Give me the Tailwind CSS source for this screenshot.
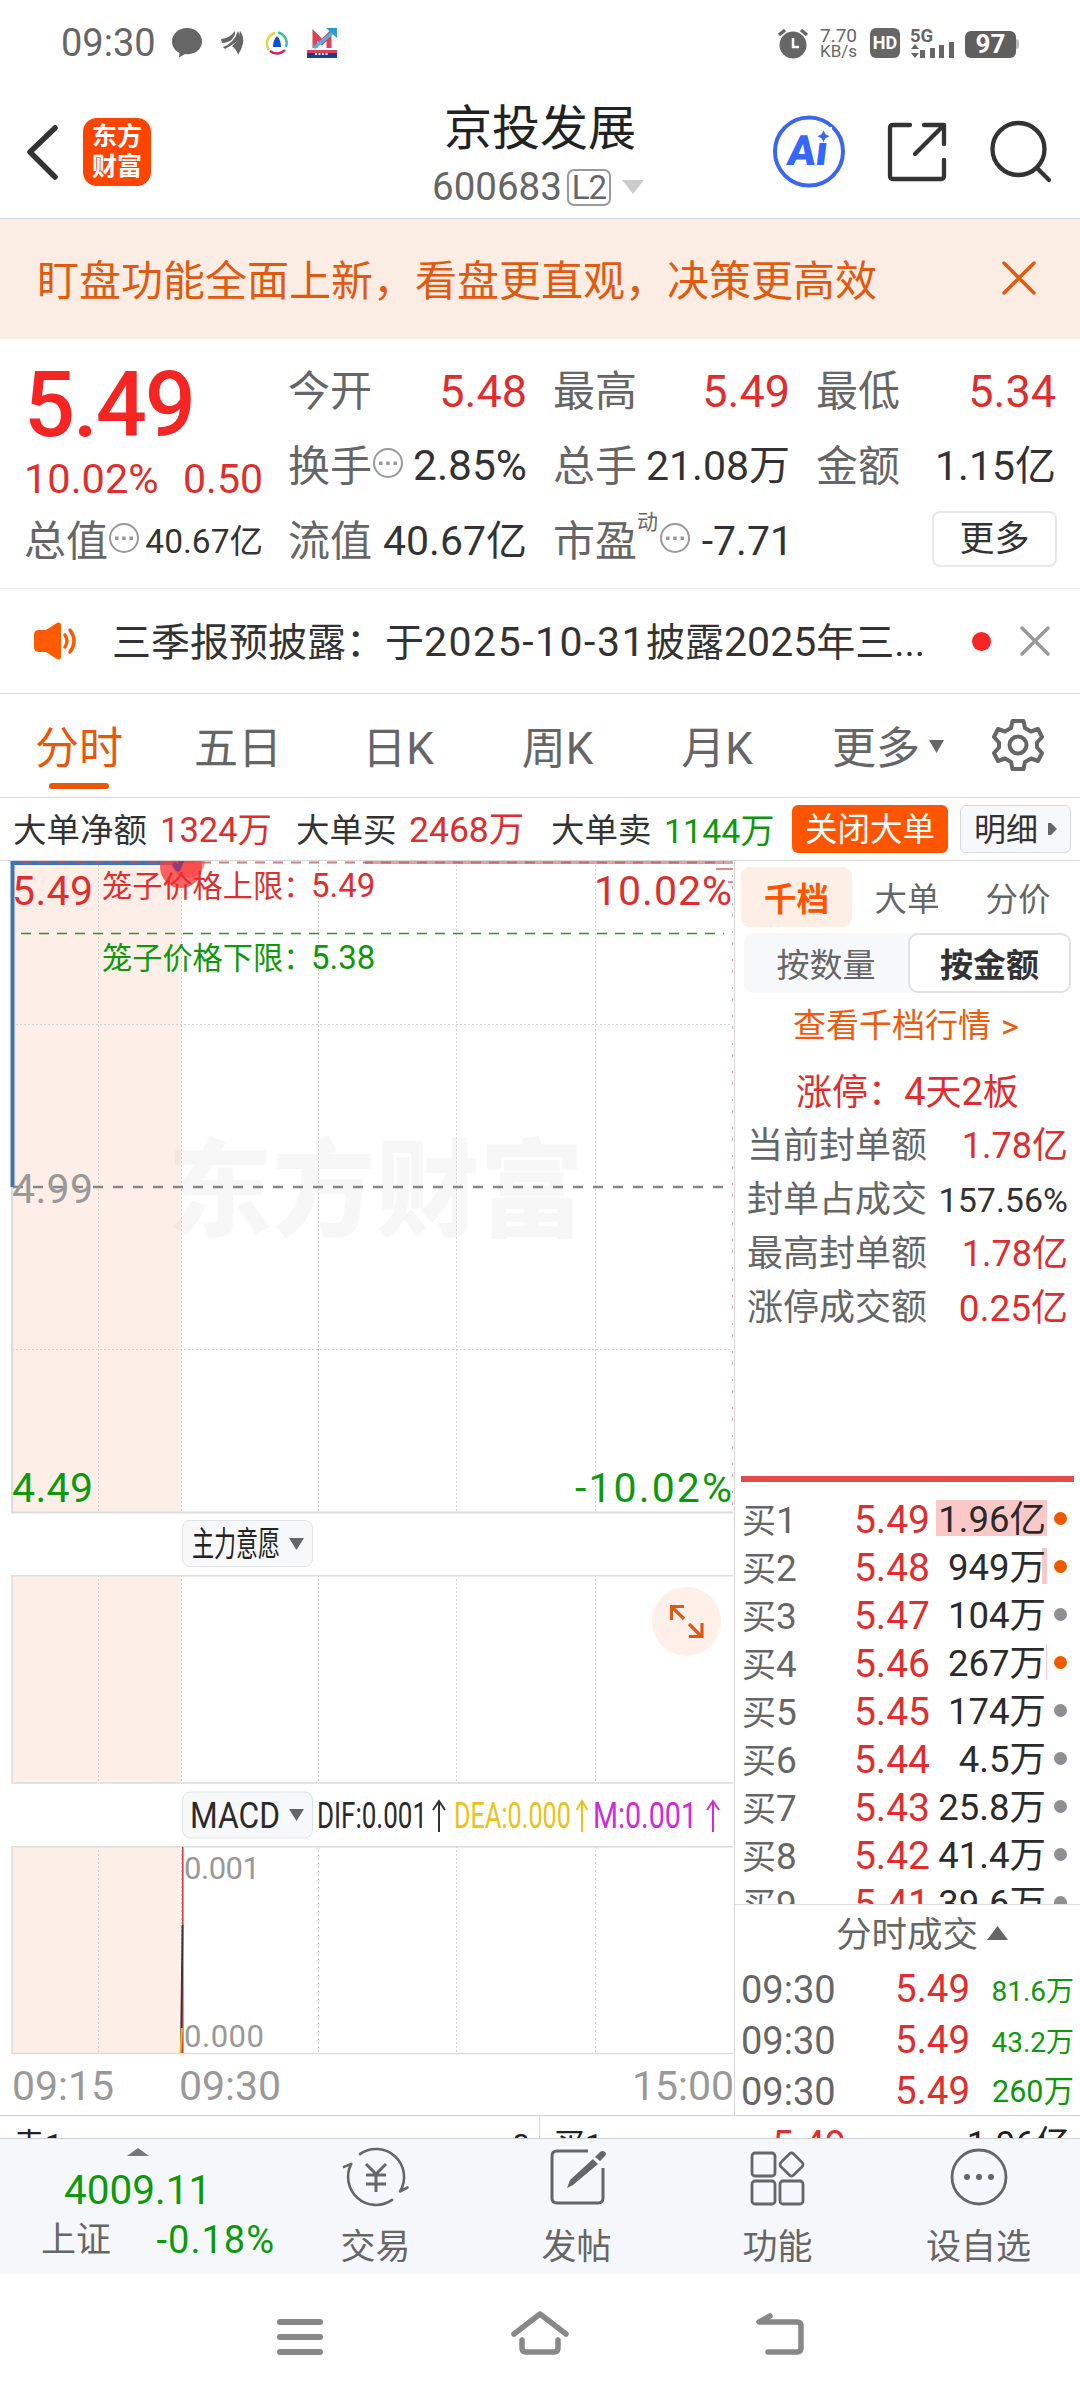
<!DOCTYPE html>
<html lang="zh-CN">
<head>
<meta charset="utf-8">
<title>京投发展 600683</title>
<script src="https://cdn.jsdelivr.net/npm/@tailwindcss/browser@4"></script>
</head>
<body class="w-[1080px] h-[2400px] overflow-hidden bg-white font-['Roboto','Noto_Sans_CJK_SC',sans-serif] text-[#333] whitespace-nowrap leading-none">

<!-- status bar -->
<div class="h-[85px] pl-[61px] pr-[61px] flex items-center justify-between text-[#666]">
  <div class="flex items-center">
    <span class="text-[38px] w-[96px]">09:30</span>
    <svg class="ml-[14px]" width="32" height="32" viewBox="0 0 32 32"><path fill="#666" d="M16 1C7.500 1 1 7 1 14.500c0 5 3 9.300 7.500 11.500L8 30.500l6-3.600C24 28.500 31 22 31 14.500 31 7 24.500 1 16 1z"/></svg>
    <svg class="ml-[17px]" width="26" height="28" viewBox="0 0 26 28"><g fill="#666"><path d="M1 10Q10 9 15 2q1 5-5 10Q6 14 2 14z"/><path d="M3 18Q14 14 18 2q4 6-3 12Q10 17 5 20z"/><path d="M12 17Q19 12 20 2q4 5 3 12-1 6-5 12-1-5-6-9z"/></g></svg>
    <svg class="ml-[18px]" width="26" height="26" viewBox="0 0 26 26" fill="none" stroke-width="2.500"><path stroke="#e8d040" d="M5 20A11 11 0 0 1 11 3"/><path stroke="#3fc0a8" d="M14 2.500A11 11 0 0 1 22 17"/><path stroke="#d8205c" d="M6 21A11 11 0 0 0 21 20"/><path fill="#0a50d8" d="M13 6q4 4 4 11H9q0-7 4-11z"/></svg>
    <svg class="ml-[16px]" width="32" height="32" viewBox="0 0 32 32"><path fill="none" stroke="#e04058" stroke-width="5" d="M9 21V8l7 7 7-7v13"/><path fill="none" stroke="#45b8e8" stroke-width="3.500" d="M8 21 26 6"/><path fill="#2a9ad0" d="M20 1h11v10z"/><path fill="#e0405a" d="M1 23h30v3H1z"/><path fill="#1c3f90" d="M1 26h30v5H1z"/><path stroke="#fff" stroke-width="2" stroke-dasharray="2 1.500" d="M9 27h14"/></svg>
  </div>
  <div class="flex items-center">
    <svg width="32" height="32" viewBox="0 0 32 32"><circle cx="16" cy="18" r="13.500" fill="#666"/><path stroke="#666" stroke-width="3.500" d="m2 8 6-5M30 8l-6-5"/><path stroke="#fff" stroke-width="2.500" fill="none" d="M16 11v9h6"/></svg>
    <div class="ml-[11px] w-[42px] flex flex-col"><span class="text-[19px] leading-[17px]">7.70</span><span class="text-[17px] leading-[15px]">KB/s</span></div>
    <div class="ml-[8px] w-[30px] h-[30px] rounded-[6px] bg-[#666] text-white text-[18px] font-bold flex items-center justify-center">HD</div>
    <svg class="ml-[10px]" width="48" height="32" viewBox="0 0 48 32"><text x="0" y="15" font-size="18.500" font-weight="bold" fill="#666">5G</text><path fill="#666" d="m5 17 4 5H1zM5 31l4-5H1zM10 23h5v8h-5zM20 21h5v10h-5zM29 18h5v13h-5zM39 15h5v16h-5z"/></svg>
    <div class="ml-[7px] w-[51px] h-[27px] mt-[3px] rounded-[6px] bg-[#5f5f5f] text-white text-[26px] font-bold flex items-center justify-center">97</div>
    <div class="w-[3px] h-[10px] mt-[3px] rounded-r bg-[#bbb]"></div>
  </div>
</div>

<!-- title bar -->
<div class="h-[133px] flex border-b-[1px] border-[#d3d6d9] box-content">
  <div class="w-[400px] flex items-start pt-[33px] pl-[23px]">
    <svg width="40" height="68" viewBox="0 0 40 68"><path d="M32 10 7 34l25 25" fill="none" stroke="#333" stroke-width="5.500" stroke-linecap="round" stroke-linejoin="round"/></svg>
    <div class="ml-[20px] w-[68px] h-[68px] rounded-[14px] bg-[#ff4400] text-white text-[25px] font-bold leading-[30px] pt-[4px] text-center">东方<br>财富</div>
  </div>
  <div class="w-[280px] flex flex-col items-center pt-[18px]">
    <div class="text-[48px] leading-[52px] text-[#222]">京投发展</div>
    <div class="mt-[10px] w-full flex items-center pl-[32px] text-[#666]">
      <span class="text-[38.500px] leading-[44px]">600683</span>
      <span class="ml-[5px] w-[44px] h-[37px] border-2 border-[#999] rounded-[7px] text-[33px] leading-[33px] text-center tracking-[-1px]">L2</span>
      <svg class="ml-[10px]" width="24" height="16" viewBox="0 0 24 16"><path d="M1 1h22L12 15z" fill="#ccc"/></svg>
    </div>
  </div>
  <div class="flex items-start pt-[30px] pl-[92px]">
    <svg width="74" height="74" viewBox="0 0 74 74"><circle cx="37" cy="36.500" r="34" fill="#fff" stroke="#3b66f0" stroke-width="4"/><g transform="translate(0 50) skewX(-7)"><text x="14" y="0" font-size="42" font-weight="900" fill="#3566ff" textLength="40" lengthAdjust="spacingAndGlyphs">Ai</text></g><path fill="#fff" d="M42 12h18v16H42z"/><path fill="#3b66f0" d="m51.500 15.500 2 3.800 4 2-4 2-2 3.800-2-3.800-4-2 4-2z"/></svg>
    <svg class="ml-[40px]" width="62" height="74" viewBox="0 0 62 74" fill="none" stroke="#333" stroke-width="4.300" stroke-linecap="round" stroke-linejoin="round"><path d="M24 10H7q-3 0-3 3v48q0 3 3 3h48q3 0 3-3V45M38 10h20v19M58 10 29 39"/></svg>
    <svg class="ml-[40px]" width="66" height="74" viewBox="0 0 66 74" fill="none" stroke="#333" stroke-width="4.300" stroke-linecap="round"><circle cx="30.500" cy="34" r="26"/><path d="m49 53 12 12"/></svg>
  </div>
</div>

<!-- notice banner -->
<div class="h-[120px] bg-[#fcede4] flex items-center justify-between pl-[37px] pr-[43px] text-[#e05a10]">
  <span class="text-[42px] pt-[6px]">盯盘功能全面上新，看盘更直观，决策更高效</span>
  <svg width="36" height="36" viewBox="0 0 36 36"><path d="m3 2 30 30M33 2 3 32" stroke="#e05a10" stroke-width="3.500" stroke-linecap="round"/></svg>
</div>

<!-- quote summary -->
<div class="h-[250px] pt-[15px] pl-[24px] flex border-b-[1px] border-[#ececec] text-[41px]">
  <div class="w-[264px]">
    <div class="h-[104px] flex items-center text-[90px] font-medium text-[#f42522] tracking-[-2.200px]">5.49</div>
    <div class="h-[46px] w-[239px] -mt-[2px] flex items-center justify-between text-[#e02e2e]"><span class="text-[41.500px]">10.02%</span><span>0.50</span></div>
    <div class="h-[75px] w-[239px] mt-[2px] flex items-center"><span class="text-[42px] text-[#666]">总值</span><svg class="-mt-[7px] ml-[1px]" width="30" height="30" viewBox="0 0 30 30"><circle cx="15" cy="15" r="14" fill="none" stroke="#999" stroke-width="2"/><path fill="#999" d="M6 13.500h3.500v3.500H6zM13.200 13.500h3.500v3.500h-3.500zM20.500 13.500H24v3.500h-3.500z"/></svg><span class="ml-auto text-[33.500px]">40.67亿</span></div>
  </div>
  <div class="w-[265px] pr-[26px]">
    <div class="h-[75px] flex items-center justify-between"><span class="text-[42px] text-[#666]">今开</span><span class="text-[45px] text-[#e02e2e]">5.48</span></div>
    <div class="h-[75px] flex items-center"><span class="text-[42px] text-[#666]">换手</span><svg class="-mt-[7px] ml-[1px]" width="30" height="30" viewBox="0 0 30 30"><circle cx="15" cy="15" r="14" fill="none" stroke="#999" stroke-width="2"/><path fill="#999" d="M6 13.500h3.500v3.500H6zM13.200 13.500h3.500v3.500h-3.500zM20.500 13.500H24v3.500h-3.500z"/></svg><span class="ml-auto text-[42.500px]">2.85%</span></div>
    <div class="h-[75px] flex items-center justify-between"><span class="text-[42px] text-[#666]">流值</span><span>40.67亿</span></div>
  </div>
  <div class="w-[263px] pr-[26px]">
    <div class="h-[75px] flex items-center justify-between"><span class="text-[42px] text-[#666]">最高</span><span class="text-[45px] text-[#e02e2e]">5.49</span></div>
    <div class="h-[75px] flex items-center justify-between"><span class="text-[42px] text-[#666]">总手</span><span>21.08万</span></div>
    <div class="h-[75px] flex items-center"><span class="text-[42px] text-[#666]">市盈</span><span class="text-[21px] text-[#666] -mt-[38px]">动</span><svg class="-mt-[7px] ml-[2px]" width="30" height="30" viewBox="0 0 30 30"><circle cx="15" cy="15" r="14" fill="none" stroke="#999" stroke-width="2"/><path fill="#999" d="M6 13.500h3.500v3.500H6zM13.200 13.500h3.500v3.500h-3.500zM20.500 13.500H24v3.500h-3.500z"/></svg><span class="ml-auto -mr-[3px] text-[41px]">-7.71</span></div>
  </div>
  <div class="w-[240px]">
    <div class="h-[75px] flex items-center justify-between"><span class="text-[42px] text-[#666]">最低</span><span class="text-[45px] text-[#e02e2e]">5.34</span></div>
    <div class="h-[75px] flex items-center justify-between"><span class="text-[42px] text-[#666]">金额</span><span>1.15亿</span></div>
    <div class="h-[75px] pt-[7px] flex justify-end"><span class="w-[125px] h-[56px] -mr-[1px] border-2 border-[#e6e8ea] rounded-[8px] text-[35px] flex items-center justify-center">更多</span></div>
  </div>
</div>

<!-- news line -->
<div class="h-[105px] pl-[32px] flex items-center border-b-[1px] border-[#d6d6d6]">
  <svg width="50" height="42" viewBox="0 0 50 42"><path fill="#ff5a00" d="M7 10h7L24 3.500q5-2.500 5 2v31q0 4.500-5 2L14 32H7q-5 0-5-5V15q0-5 5-5z"/><path fill="none" stroke="#ff5a00" stroke-width="3.500" stroke-linecap="round" d="M33 15q4 6 0 12M38 10q8 11 0 22"/></svg>
  <span class="ml-[30px] w-[815px] pt-[2px] text-[39px]">三季报预披露：于<span class="text-[41px] tracking-[1.500px]">2025-10-31</span>披露<span class="text-[41px]">2025</span>年三...</span>
  <span class="ml-[45px] w-[19px] h-[19px] rounded-full bg-[#f42522]"></span>
  <svg class="ml-[28px]" width="32" height="32" viewBox="0 0 32 32"><path d="m3 3 26 26M29 3 3 29" stroke="#999" stroke-width="3.500" stroke-linecap="round"/></svg>
</div>

<!-- period tabs -->
<div class="h-[104px] flex border-b-[1px] border-[#d6d6d6] text-[44px] text-[#666]">
  <div class="w-[158px] pt-[33px] flex flex-col items-center text-[#e55a0a]"><span>分时</span><span class="mt-[12px] w-[60px] h-[6px] rounded-full bg-[#e55a0a]"></span></div>
  <div class="w-[160px] pt-[33px] text-center">五日</div>
  <div class="w-[160px] pt-[33px] text-center">日K</div>
  <div class="w-[159px] pt-[33px] text-center">周K</div>
  <div class="w-[160px] pt-[33px] text-center">月K</div>
  <div class="w-[191px] pt-[33px] pl-[35px] flex items-start"><span>更多</span><svg class="ml-[8px] mt-[12px]" width="18" height="16" viewBox="0 0 18 16"><path d="M1 1h15L8.500 14z" fill="#666"/></svg></div>
  <svg class="mt-[22px] ml-[1px]" width="58" height="58" viewBox="-29 -29 58 58" fill="none" stroke="#666" stroke-width="4" stroke-linejoin="round"><circle r="8.500"/><path d="M-5.500-24h11l1.500 7 6 3.500 7-2.500 4 8-5 5.500v5l5 5.500-4 8-7-2.500-6 3.500-1.500 7h-11l-1.500-7-6-3.500-7 2.500-4-8 5-5.500v-5l-5-5.500 4-8 7 2.500 6-3.500z"/></svg>
</div>

<!-- big order summary -->
<div class="h-[63px] pl-[13px] flex items-center border-b-[1px] border-[#d6d6d6] text-[33.500px]">
  <span class="w-[147px] pt-[3px]">大单净额</span><span class="w-[136px] pt-[3px] text-[34.500px] text-[#e02e2e]">1324万</span>
  <span class="w-[113px] pt-[3px]">大单买</span><span class="w-[142px] pt-[3px] text-[35.500px] text-[#e02e2e]">2468万</span>
  <span class="w-[113px] pt-[3px]">大单卖</span><span class="w-[128px] pt-[3px] text-[34px] text-[#0c9a0c]">1144万</span>
  <span class="w-[156px] h-[48px] pt-[2px] rounded-[6px] bg-[#ff5500] text-white text-[32.500px] flex items-center justify-center">关闭大单</span>
  <span class="ml-[12px] w-[111px] h-[48px] pt-[2px] rounded-[6px] border-[1px] border-[#d5d9dc] bg-[#f7f8fa] text-[32px] flex items-center pl-[13px]">明细<svg class="ml-[9px] -mt-[2px]" width="11" height="14" viewBox="0 0 11 14"><path d="M1 1h3l6 6-6 6H1z" fill="#666"/></svg></span>
</div>

<div class="h-[1255px] flex border-b-[1px] border-[#d0d0d0]">
  <!-- charts -->
  <div class="w-[735px] border-r-[1px] border-[#d6d6d6]">
    <svg class="block" width="734" height="653" viewBox="0 861 734 653" font-size="41">
      <path fill="#fdeee7" d="M12 861h169v651H12z"/>
      <text x="168" y="1228" font-size="106" font-weight="900" fill="#000" fill-opacity=".03" textLength="416" lengthAdjust="spacingAndGlyphs">东方财富</text>
      <path fill="none" stroke="#d2d2d2" stroke-dasharray="2 2" d="M98.500 861v651M181.500 861v651M318.500 861v651M456.500 861v651M595.500 861v651M12 1024.500h720M12 1349.500h720"/>
      <path stroke="#d9a0a0" stroke-dasharray="2 9 3 14" d="M732.500 875v630"/>
      <path stroke="#dcdcdc" stroke-width="2" d="M12 861v651M11 1512.500h722"/>
      <path stroke="#888" stroke-width="2.500" stroke-dasharray="10 10" d="M13 1187h716"/>
      <path fill="none" stroke="#3b74b8" stroke-width="4" d="M12.500 1187V863H181"/>
      <path stroke="#e0a0a0" stroke-width="3" d="M365 862.500h368"/><path stroke="#e58a8a" stroke-width="2" d="M716 869h17M728 882h5"/>
      <path stroke="#c05060" stroke-opacity=".75" stroke-width="2" stroke-dasharray="10 8" d="M21 862.500h703"/>
      <path stroke="#2c902c" stroke-width="1.500" stroke-dasharray="10 8" d="M21 933.500h703"/>
      <circle cx="188" cy="861" r="17" fill="#f44" fill-opacity=".55"/><circle cx="181" cy="867" r="21" fill="#f83c3c" fill-opacity=".8"/><path stroke="#8a3c78" stroke-width="5" stroke-linecap="round" d="m178 869 4-9M175 865l3 4"/>
      <g fill="#e02e2e"><text x="12" y="905" textLength="81">5.49</text><text x="594" y="905" textLength="138">10.02%</text><text x="102" y="897" font-size="30.200">笼子价格上限：<tspan x="311" font-size="33">5.49</tspan></text></g>
      <g fill="#0c9a0c"><text x="102" y="969" font-size="30.200">笼子价格下限：<tspan x="311" font-size="33">5.38</tspan></text><text x="12" y="1502" textLength="81">4.49</text><text x="575" y="1502" textLength="157">-10.02%</text></g>
      <text x="12" y="1203" fill="#999" textLength="81">4.99</text>
    </svg>
    <div class="h-[61px] pl-[182px] pt-[6px]">
      <div class="w-[131px] h-[47px] rounded-[8px] border-[1px] border-[#dfe3e7] bg-[#f7f8fa]"><svg width="129" height="45" viewBox="0 0 129 45"><text x="9" y="35" font-size="34" fill="#222" textLength="88" lengthAdjust="spacingAndGlyphs">主力意愿</text><path d="M106 17h15l-7.500 12z" fill="#666"/></svg></div>
    </div>
    <svg class="block" width="734" height="210" viewBox="0 1575 734 210">
      <path fill="#fdeee7" d="M12 1575h169v208H12z"/>
      <path fill="none" stroke="#d2d2d2" stroke-dasharray="2 2" d="M98.500 1575v208M181.500 1575v208M318.500 1575v208M456.500 1575v208M595.500 1575v208"/>
      <path fill="none" stroke="#dcdcdc" stroke-width="1.500" d="M733 1575.700H12V1783h721"/>
      <circle cx="686.500" cy="1621.500" r="34.500" fill="#fef0e8"/>
      <path fill="none" stroke="#dc5a14" stroke-width="3.200" d="M684 1606.500h-12.500V1620M672 1607l12 12M689 1624l12 12M689 1636.500h13V1623"/>
    </svg>
    <div class="h-[61px] pt-[6px]">
      <svg class="block" width="734" height="48" viewBox="0 1791 734 48" font-size="36.500"><rect x="182.500" y="1792" width="130" height="46" rx="8" fill="#f7f8fa" stroke="#dfe3e7"/><path d="M289 1809h15l-7.500 12z" fill="#666"/>
      <g fill="#2b2b2b"><text x="190" y="1828" textLength="90" lengthAdjust="spacingAndGlyphs">MACD</text><text x="317" y="1828" textLength="110" lengthAdjust="spacingAndGlyphs">DIF:0.001</text></g>
      <text x="454" y="1828" fill="#ecc21a" textLength="117" lengthAdjust="spacingAndGlyphs">DEA:0.000</text><text x="593" y="1828" fill="#d22ad8" textLength="104" lengthAdjust="spacingAndGlyphs">M:0.001</text>
      <g fill="none" stroke-width="2"><path stroke="#333" d="M439 1832v-30M433 1810l6-9 6 9"/><path stroke="#ecc21a" d="M582 1832v-30M576.500 1810l5.500-9 5.500 9"/><path stroke="#d22ad8" d="M713 1832v-30M707 1810l6-9 6 9"/></g></svg>
    </div>
    <svg class="block" width="734" height="209" viewBox="0 1846 734 209" font-size="31" fill="#999">
      <path fill="#fdeee7" d="M12 1846h169v207H12z"/>
      <path fill="none" stroke="#d2d2d2" stroke-dasharray="2 2" d="M98.500 1846v207M181.500 1846v207M318.500 1846v207M456.500 1846v207M595.500 1846v207"/>
      <path fill="none" stroke="#dcdcdc" stroke-width="1.500" d="M733 1846.700H12V2053.500h721"/>
      <path stroke="#d03434" stroke-width="1.500" d="M182.800 1847v206"/><path stroke="#333" stroke-width="1.800" d="M182.500 1925 181 2053"/><path stroke="#ecb81a" stroke-width="2" d="m182 2028-1.500 25"/>
      <text x="184" y="1879" textLength="76">0.001</text><text x="184" y="2047" textLength="80">0.000</text>
    </svg>
    <div class="h-[60px] pl-[12px] flex items-center text-[41px] text-[#999] pt-[3px]"><span class="w-[167px]">09:15</span><span>09:30</span><span class="ml-auto">15:00</span></div>
  </div>

  <!-- order book -->
  <div class="w-[345px] text-[36px]">
    <div class="h-[66px] mt-[6px] pl-[6px] flex items-start text-[32.500px] text-[#666]">
      <span class="w-[111px] h-[60px] rounded-[9px] bg-[#fdeee6] text-[#ff5500] font-bold flex items-center justify-center pt-[6px]">千档</span>
      <span class="w-[110px] h-[60px] flex items-center justify-center pt-[6px]">大单</span>
      <span class="w-[112px] h-[60px] flex items-center justify-center pt-[6px]">分价</span>
    </div>
    <div class="ml-[9px] w-[327px] h-[60px] rounded-[10px] bg-[#f7f8fa] flex text-[33px]">
      <span class="w-[164px] flex items-center justify-center pt-[5px] text-[#666]">按数量</span>
      <span class="w-[163px] rounded-[10px] border-2 border-[#e2e2e2] bg-white font-bold flex items-center justify-center pt-[5px]">按金额</span>
    </div>
    <div class="h-[64px] pl-[58px] pt-[1px] flex items-center text-[33px] text-[#f05a0a]">查看千档行情<span class="ml-[10px] text-[34px]">&gt;</span></div>
    <div class="h-[62px] pt-[8px] flex items-center justify-center text-[36px] text-[#e02e2e]"><span>涨停：<span class="text-[38px]">4</span>天<span class="text-[38px]">2</span>板</span></div>
    <div class="pl-[12px] pr-[12px] text-[#666]">
      <div class="h-[54px] flex items-center justify-between"><span>当前封单额</span><span class="text-[#e02e2e]">1.78亿</span></div>
      <div class="h-[54px] flex items-center justify-between"><span>封单占成交</span><span class="text-[34px] text-[#333]">157.56%</span></div>
      <div class="h-[54px] flex items-center justify-between"><span>最高封单额</span><span class="text-[#e02e2e]">1.78亿</span></div>
      <div class="h-[54px] flex items-center justify-between"><span>涨停成交额</span><span class="text-[37px] text-[#e02e2e]">0.25亿</span></div>
    </div>
    <div class="mt-[141px] ml-[6px] w-[333px] h-[6px] bg-[#e54b4b]"></div>
    <div class="h-[423px] pt-[14px] pl-[7px] overflow-hidden border-b-[1px] border-[#dcdcdc] text-[#2b2b2b]" id="bids"></div>
    <div class="h-[59px] pt-[2px] pl-[101px] flex items-center text-[35.500px] text-[#666]">分时成交<svg class="ml-[8px] -mt-[6px]" width="23" height="16" viewBox="0 0 23 16"><path d="M1 15h21L11.500 1z" fill="#666"/></svg></div>
    <div class="pl-[6px] pr-[6px] text-[38px]">
      <div class="h-[51px] flex items-center"><span class="w-[154px] text-[#666]">09:30</span><span class="text-[38.500px] text-[#e02e2e]">5.49</span><span class="ml-auto text-[28px] text-[#0c9a0c] pt-[4px]">81.6万</span></div>
      <div class="h-[51px] flex items-center"><span class="w-[154px] text-[#666]">09:30</span><span class="text-[38.500px] text-[#e02e2e]">5.49</span><span class="ml-auto text-[28px] text-[#0c9a0c] pt-[4px]">43.2万</span></div>
      <div class="h-[51px] flex items-center"><span class="w-[154px] text-[#666]">09:30</span><span class="text-[38.500px] text-[#e02e2e]">5.49</span><span class="ml-auto text-[30.500px] text-[#0c9a0c] pt-[2px]">260万</span></div>
    </div>
  </div>
</div>

<!-- five-level table peeking out above the toolbar -->
<div class="h-[22px] overflow-hidden flex text-[32px] leading-[32px] text-[#222]">
  <div class="w-[540px] h-[22px] border-r-[1px] border-[#d6d6d6] pl-[13px] pr-[9px] pt-[13px] flex justify-between"><span>卖1</span><span>0</span></div>
  <div class="w-[540px] h-[22px] pl-[13px] pr-[10px] pt-[13px] flex"><span class="w-[219px]">买1</span><span class="text-[38px] text-[#e02e2e]">5.49</span><span class="ml-auto text-[35px]">1.96亿</span></div>
</div>

<!-- toolbar -->
<div class="h-[136px] bg-[#f6f7fa] border-t-[1px] border-[#cfd2d5] flex text-[35px] text-[#666]">
  <div class="w-[275px] flex flex-col">
    <svg class="ml-[126px] mt-[9px]" width="24" height="8" viewBox="0 0 24 8"><path d="M1 8h22L12 0z" fill="#777"/></svg>
    <div class="pl-[64px] mt-[12px] h-[44px] text-[40.500px] leading-[44px] text-[#0c9a0c]">4009.11</div>
    <div class="pl-[41px] mt-[6px] h-[44px] flex items-center justify-between"><span>上证</span><span class="text-[38px] text-[#0c9a0c] tracking-[1px]">-0.18%</span></div>
  </div>
  <div class="w-[201px] pt-[7px] flex flex-col items-center">
    <svg width="68" height="62" viewBox="-34 -31 68 62" fill="none" stroke="#666" stroke-width="2.600" stroke-linecap="round" stroke-linejoin="round"><path d="M-16.100-22.900A28 28 0 0 1 24 14.500l7.500-4M16.100 22.900A28 28 0 0 1-24.700-13.100l-7.300 3"/><path d="M-10-13 0-3l10-10M0-3v18M-10-2h20M-10 7h20" stroke-width="3" stroke-linecap="butt"/></svg>
    <span class="mt-[22px]">交易</span>
  </div>
  <div class="w-[201px] pt-[7px] flex flex-col items-center">
    <svg width="60" height="62" viewBox="-30 -31 60 62" fill="none" stroke="#666" stroke-width="3" stroke-linejoin="round"><path d="M11-26h-31q-5 0-5 5v42q0 5 5 5h41q5 0 5-5V-9"/><path fill="#666" stroke="none" d="m16-18 5 5L-4 8l-6 3 3-8zM18-20l5-5q3-2 5 0t0 4l-5 5z"/></svg>
    <span class="mt-[22px]">发帖</span>
  </div>
  <div class="w-[201px] pt-[7px] flex flex-col items-center">
    <svg width="60" height="62" viewBox="-30 -31 60 62" fill="none" stroke="#666" stroke-width="2.800"><rect x="-26" y="-24" width="23" height="23" rx="3"/><rect x="-26" y="4" width="23" height="23" rx="3"/><rect x="2" y="4" width="23" height="23" rx="3"/><rect x="-9" y="-9" width="18" height="18" rx="3" transform="translate(13.500 -12.500) rotate(45)"/></svg>
    <span class="mt-[22px]">功能</span>
  </div>
  <div class="w-[201px] pt-[7px] flex flex-col items-center">
    <svg width="60" height="62" viewBox="-30 -31 60 62"><circle r="27" fill="none" stroke="#666" stroke-width="2.800"/><circle cx="-12" r="3" fill="#666"/><circle r="3" fill="#666"/><circle cx="12" r="3" fill="#666"/></svg>
    <span class="mt-[22px]">设自选</span>
  </div>
</div>

<!-- system navigation -->
<div class="h-[125px] pt-[34px] pl-[270px] flex">
  <svg width="60" height="56" viewBox="270 2308 60 56" stroke="#888" stroke-width="6" stroke-linecap="round"><path d="M280 2322h40M280 2337h40M280 2352h40"/></svg>
  <svg class="ml-[180px]" width="60" height="56" viewBox="510 2308 60 56" fill="none" stroke="#888" stroke-width="5.500" stroke-linecap="round" stroke-linejoin="round"><path d="m514 2334 26-20 26 20M522 2340v8q0 4 4 4h28q4 0 4-4v-8"/></svg>
  <svg class="ml-[180px]" width="60" height="56" viewBox="750 2308 60 56" fill="none" stroke="#888" stroke-width="5.500" stroke-linecap="round" stroke-linejoin="round"><path d="m770 2316-11 6h38q4 0 4 4v22q0 4-4 4h-29"/></svg>
</div>

<script>
  // [level, price, amount, depth bar width, highlighted dot]
  const bids = [
    [1, '5.49', '1.96亿', 111, 1], [2, '5.48', '949万', 5, 1], [3, '5.47', '104万', 0, 0],
    [4, '5.46', '267万', 1, 1], [5, '5.45', '174万', 0, 0], [6, '5.44', '4.5万', 0, 0],
    [7, '5.43', '25.8万', 0, 0], [8, '5.42', '41.4万', 0, 0], [9, '5.41', '39.6万', 0, 0]
  ];
  document.getElementById('bids').innerHTML = bids.map(([n, p, a, w, hot]) => `
    <div class="h-[48px] flex items-center">
      <span class="w-[70px] text-[34px] text-[#666]">买<span class="text-[37px]">${n}</span></span>
      <span class="w-[118px] text-right text-[39px] text-[#e02e2e]">${p}</span>
      <span class="relative w-[117px] h-[48px] flex items-center justify-end pr-[1px] text-[36.500px]">
        <span class="absolute right-0 top-[4px] h-[36px] bg-[#fbc8c8]" style="width:${w}px"></span>
        <span class="relative">${a}</span>
      </span>
      <span class="ml-[7px] -mt-[4px] w-[13px] h-[13px] rounded-full ${hot ? 'bg-[#ec5a00]' : 'bg-[#8e8e93]'}"></span>
    </div>`).join('');
</script>
</body>
</html>
